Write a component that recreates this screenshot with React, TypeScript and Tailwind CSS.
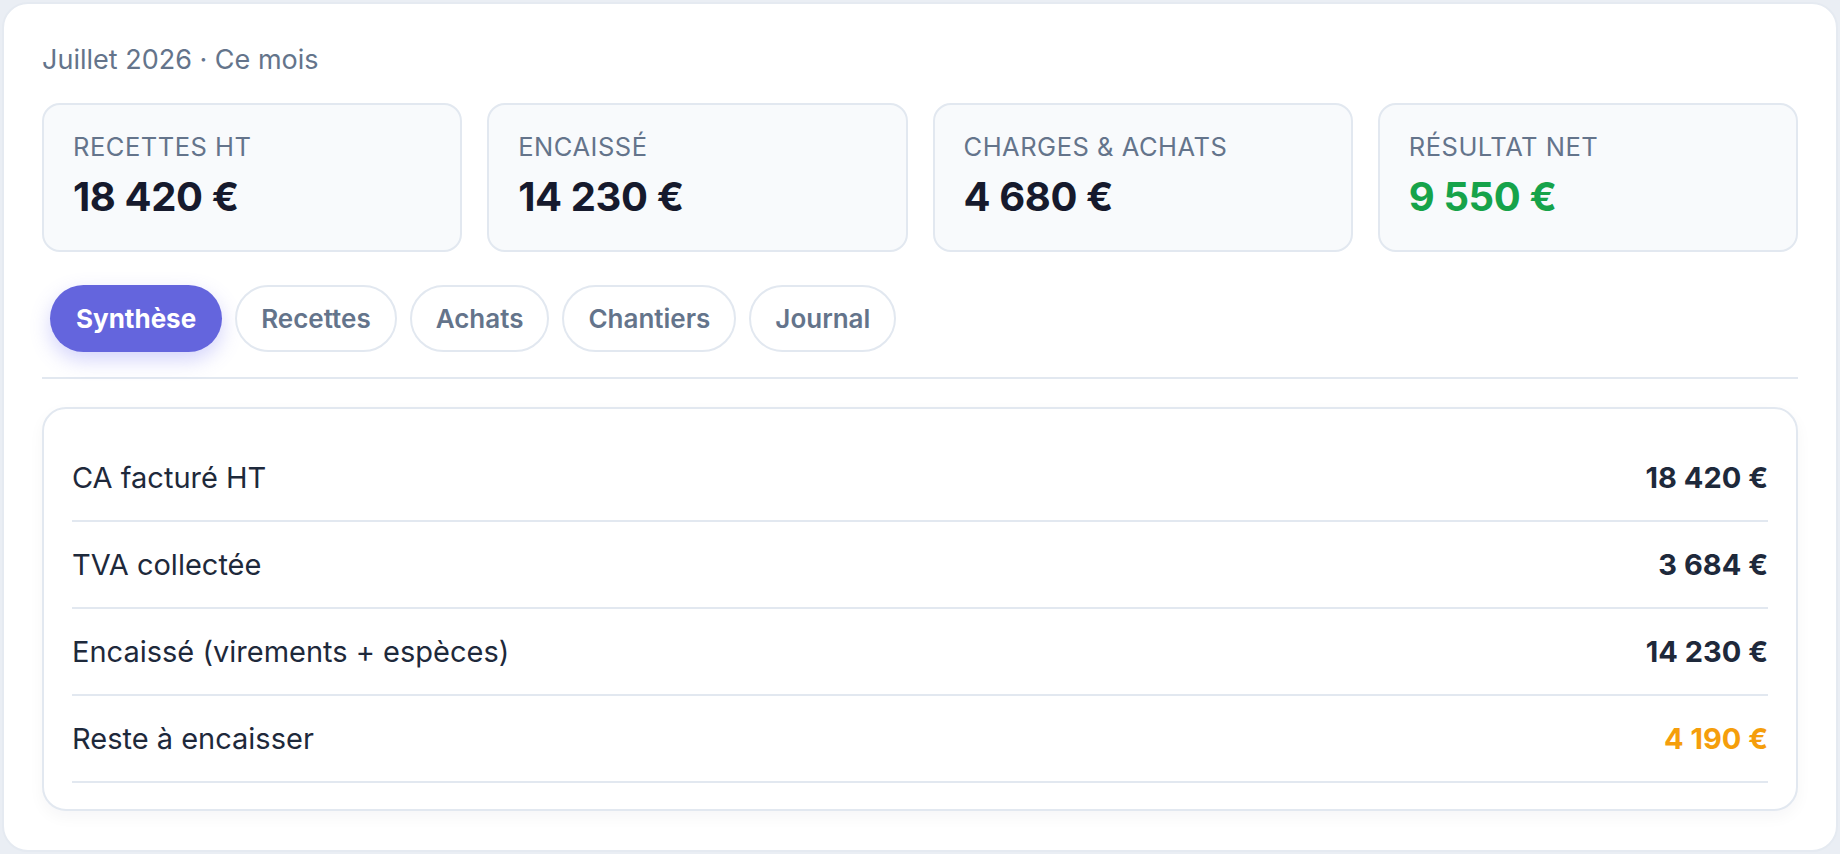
import React from "react";

const stats = [
  { label: "Recettes HT", value: "18 420 €", color: "text-[#161a2d]" },
  { label: "Encaissé", value: "14 230 €", color: "text-[#161a2d]" },
  { label: "Charges & achats", value: "4 680 €", color: "text-[#161a2d]" },
  { label: "Résultat net", value: "9 550 €", color: "text-[#16a34a]" },
];

const tabs = ["Synthèse", "Recettes", "Achats", "Chantiers", "Journal"];

const rows = [
  { label: "CA facturé HT", value: "18 420 €", color: "text-[#1e293b]" },
  { label: "TVA collectée", value: "3 684 €", color: "text-[#1e293b]" },
  { label: "Encaissé (virements + espèces)", value: "14 230 €", color: "text-[#1e293b]" },
  { label: "Reste à encaisser", value: "4 190 €", color: "text-[#f59e0b]" },
];

const App: React.FC = () => {
  return (
    <div className="h-[854px] w-full bg-[#eaeef4] p-[2px] font-['Inter','Noto_Sans',sans-serif]">
      <div className="h-full rounded-[26px] border-2 border-[#e5eaf1] bg-white px-[38px] pt-[36px]">
        <div className="text-[27px] leading-[40px] text-[#64748b]">Juillet 2026 · Ce mois</div>

        {/* Stat cards */}
        <div className="mt-[23px] grid grid-cols-4 gap-[25px]">
          {stats.map((s) => (
            <div
              key={s.label}
              className="h-[149px] rounded-[18px] border-2 border-[#e2e8f0] bg-[#f8fafc] px-[29px] pt-[25px]"
            >
              <div className="text-[25.5px] uppercase leading-[33px] tracking-[0.02em] text-[#64748b]">
                {s.label}
              </div>
              <div className={`mt-[10px] text-[40px] font-bold leading-[48px] tracking-[-0.01em] ${s.color}`}>
                {s.value}
              </div>
            </div>
          ))}
        </div>

        {/* Tabs */}
        <div className="mt-[33px] flex gap-[13px] pl-[8px]">
          {tabs.map((t, i) =>
            i === 0 ? (
              <div
                key={t}
                className="flex h-[67px] items-center rounded-full bg-[#6465dd] px-[26px] text-[26px] font-bold text-white shadow-[0_8px_20px_rgba(99,102,241,0.28)]"
              >
                {t}
              </div>
            ) : (
              <div
                key={t}
                className="flex h-[67px] items-center rounded-full border-2 border-[#e2e8f0] bg-white px-[24px] text-[26px] font-semibold text-[#64748b]"
              >
                {t}
              </div>
            )
          )}
        </div>
        <div className="mt-[25px] h-[2px] bg-[#e2e8f0]" />

        {/* Summary */}
        <div className="mt-[28px] rounded-[24px] border-2 border-[#e2e8f0] bg-white px-[28px] pt-[26px] pb-[26px] shadow-[0_6px_16px_rgba(15,23,42,0.04)]">
          {rows.map((r) => (
            <div
              key={r.label}
              className="flex items-center justify-between border-b-2 border-[#e2e8f0] py-[21px] text-[29px] leading-[43px]"
            >
              <span className="text-[#1e293b]">{r.label}</span>
              <span className={`font-bold ${r.color}`}>{r.value}</span>
            </div>
          ))}
        </div>
      </div>
    </div>
  );
};

export default App;
